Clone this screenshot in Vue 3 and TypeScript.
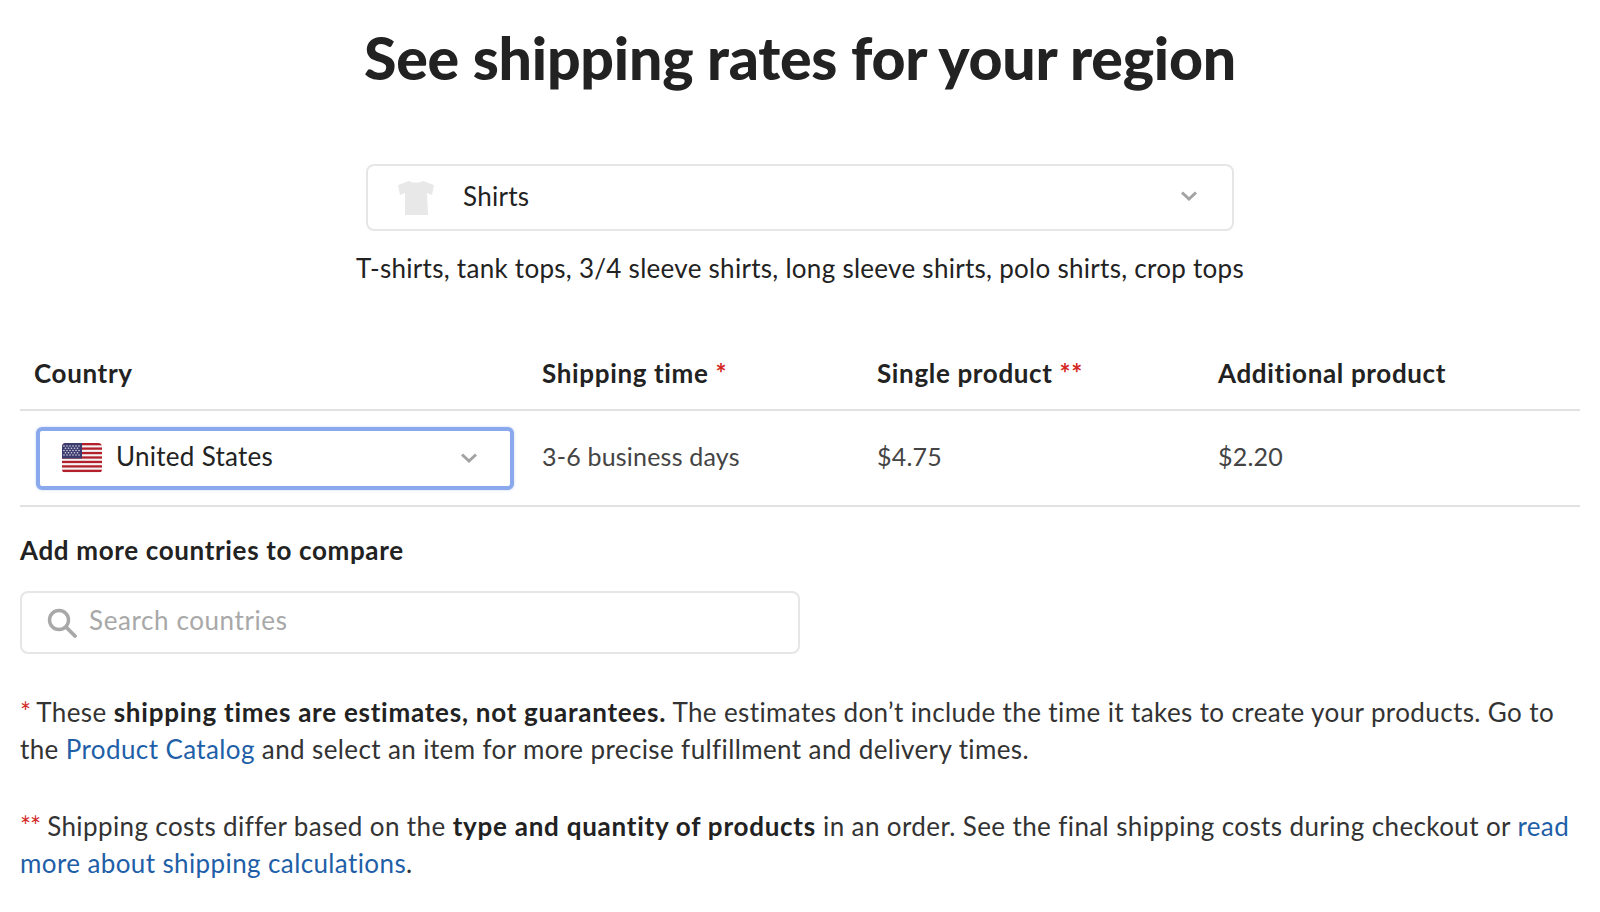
<script setup lang="ts">
const columns = [
  { label: 'Shipping time', mark: '*' },
  { label: 'Single product', mark: '**' },
  { label: 'Additional product', mark: '' },
]
const stripes = [0, 1, 2, 3, 4, 5, 6]
</script>

<template>
  <main class="page">
    <h1 class="title">See shipping rates for your region</h1>
    <div class="product-select">
      <svg class="shirt" viewBox="0 0 40 36" width="40" height="36">
        <path d="M13 1 C16 3 24 3 27 1 L38 5 L36 15 L31 13 L32 35 L9 35 L9 13 L4 15 L2 5 Z" fill="#e8e8e8" />
      </svg>
      <span class="product-name">Shirts</span>
      <svg class="chevron up" viewBox="0 0 16 10" width="16" height="10">
        <path d="M1 1.5 L8 8 L15 1.5" fill="none" stroke="#a3a3a3" stroke-width="3" />
      </svg>
    </div>
    <p class="desc">T-shirts, tank tops, 3/4 sleeve shirts, long sleeve shirts, polo shirts, crop tops</p>

    <div class="table">
      <div class="row head">
        <div class="cell first">Country</div>
        <div v-for="c in columns" :key="c.label" class="cell">
          {{ c.label }} <span v-if="c.mark" class="mark">{{ c.mark }}</span>
        </div>
      </div>
      <div class="row body">
        <div class="cell select-cell">
          <div class="country-select">
            <svg class="flag" viewBox="0 0 40 30" width="40" height="30">
              <defs>
                <clipPath id="flag-clip"><rect width="40" height="30" rx="4" /></clipPath>
              </defs>
              <g clip-path="url(#flag-clip)">
                <rect width="40" height="30" fill="#f4f4f4" />
                <rect v-for="s in stripes" :key="s" x="0" :y="s * 4.45" width="40" height="2.3" fill="#b3202c" />
                <rect width="20" height="15.5" fill="#3c3b6e" />
                <g fill="#d8d8e8">
                  <circle v-for="n in 6" :key="'a' + n" :cx="n * 3 - 1" cy="3" r=".8" />
                  <circle v-for="n in 6" :key="'b' + n" :cx="n * 3 - 1" cy="7.5" r=".8" />
                  <circle v-for="n in 6" :key="'c' + n" :cx="n * 3 - 1" cy="12" r=".8" />
                  <circle v-for="n in 5" :key="'d' + n" :cx="n * 3 + .5" cy="5.2" r=".8" />
                  <circle v-for="n in 5" :key="'e' + n" :cx="n * 3 + .5" cy="9.8" r=".8" />
                </g>
              </g>
            </svg>
            <span class="country-name">United States</span>
            <svg class="chevron" viewBox="0 0 16 10" width="16" height="10">
              <path d="M1 1.5 L8 8 L15 1.5" fill="none" stroke="#a3a3a3" stroke-width="3" />
            </svg>
          </div>
        </div>
        <div class="cell text-cell">3-6 business days</div>
        <div class="cell text-cell">$4.75</div>
        <div class="cell text-cell">$2.20</div>
      </div>
    </div>

    <h2 class="compare">Add more countries to compare</h2>
    <div class="search">
      <svg viewBox="0 0 30 30" width="30" height="30">
        <circle cx="12" cy="12" r="9.5" fill="none" stroke="#a8a8a8" stroke-width="3.4" />
        <path d="M19 19 L28 28" stroke="#a8a8a8" stroke-width="3.8" stroke-linecap="round" />
      </svg>
      <span class="placeholder">Search countries</span>
    </div>

    <p class="note first-note">
      <span class="mark thin">*</span> These <b>shipping times are estimates, not guarantees.</b> The estimates don’t include the time it takes to create your products. Go to the <a href="#">Product Catalog</a> and select an item for more precise fulfillment and delivery times.
    </p>
    <p class="note">
      <span class="mark thin">**</span> Shipping costs differ based on the <b>type and quantity of products</b> in an order. See the final shipping costs during checkout or <a href="#">read more about shipping calculations</a>.
    </p>
  </main>
</template>

<style scoped>
.page {
  box-sizing: border-box;
  width: 1600px;
  height: 912px;
  padding: 0 20px;
  overflow: hidden;
  font-family: Lato, "Open Sans", sans-serif;
  font-size: 26px;
  letter-spacing: 0.28px;
  color: #222;
  background: #fff;
}
.title {
  margin: 0;
  padding-top: 23px;
  height: 164px;
  box-sizing: border-box;
  text-align: center;
  font-size: 59px;
  line-height: 70px;
  font-weight: 900;
  letter-spacing: -0.24px;
}
.product-select {
  box-sizing: border-box;
  width: 868px;
  height: 67px;
  margin: 0 auto;
  padding: 0 35px 0 28px;
  display: flex;
  align-items: center;
  border: 2px solid #e6e6e6;
  border-radius: 8px;
}
.product-name {
  margin-left: 27px;
  flex: 1;
  padding-bottom: 3px;
}
.chevron.up {
  margin-bottom: 3px;
}
.desc {
  margin: 17px 0 0;
  text-align: center;
  line-height: 40px;
}
.table {
  margin-top: 48px;
}
.row {
  display: grid;
  grid-template-columns: 522px 335px 341px 1fr;
  align-items: center;
  border-bottom: 2px solid #e2e2e2;
}
.head {
  height: 73px;
  font-weight: 700;
  letter-spacing: 0.65px;
}
.body {
  height: 94px;
  color: #444;
}
.text-cell {
  padding-bottom: 4px;
  font-size: 25px;
  letter-spacing: 0.2px;
}
.first {
  padding-left: 14px;
}
.mark {
  color: #d3281f;
}
.select-cell {
  padding-left: 16px;
}
.country-select {
  box-sizing: border-box;
  width: 478px;
  height: 63px;
  padding: 0 33px 0 22px;
  display: flex;
  align-items: center;
  border: 4px solid #8aa9ec;
  border-radius: 6px;
  box-shadow: 0 0 3px #c9d6f5;
}
.country-name {
  flex: 1;
  margin-left: 14px;
  color: #222;
  padding-bottom: 4px;
}
.compare {
  margin: 25px 0 0;
  font-size: 26px;
  line-height: 36px;
  font-weight: 700;
  letter-spacing: 0.65px;
}
.search {
  box-sizing: border-box;
  width: 780px;
  height: 63px;
  margin-top: 23px;
  padding: 0 0 0 25px;
  display: flex;
  align-items: center;
  gap: 12px;
  border: 2px solid #e6e6e6;
  border-radius: 8px;
}
.placeholder {
  color: #a8a8a8;
  padding-bottom: 6px;
  letter-spacing: 0.6px;
}
.note {
  margin: 0;
  line-height: 37px;
  padding-top: 40px;
  color: #333;
  letter-spacing: 0.39px;
}
.note b {
  color: #222;
  letter-spacing: 0.75px;
}
.note a {
  color: #1f5fa8;
  text-decoration: none;
}
.thin {
  font-weight: 400;
  letter-spacing: -1px;
}
</style>
